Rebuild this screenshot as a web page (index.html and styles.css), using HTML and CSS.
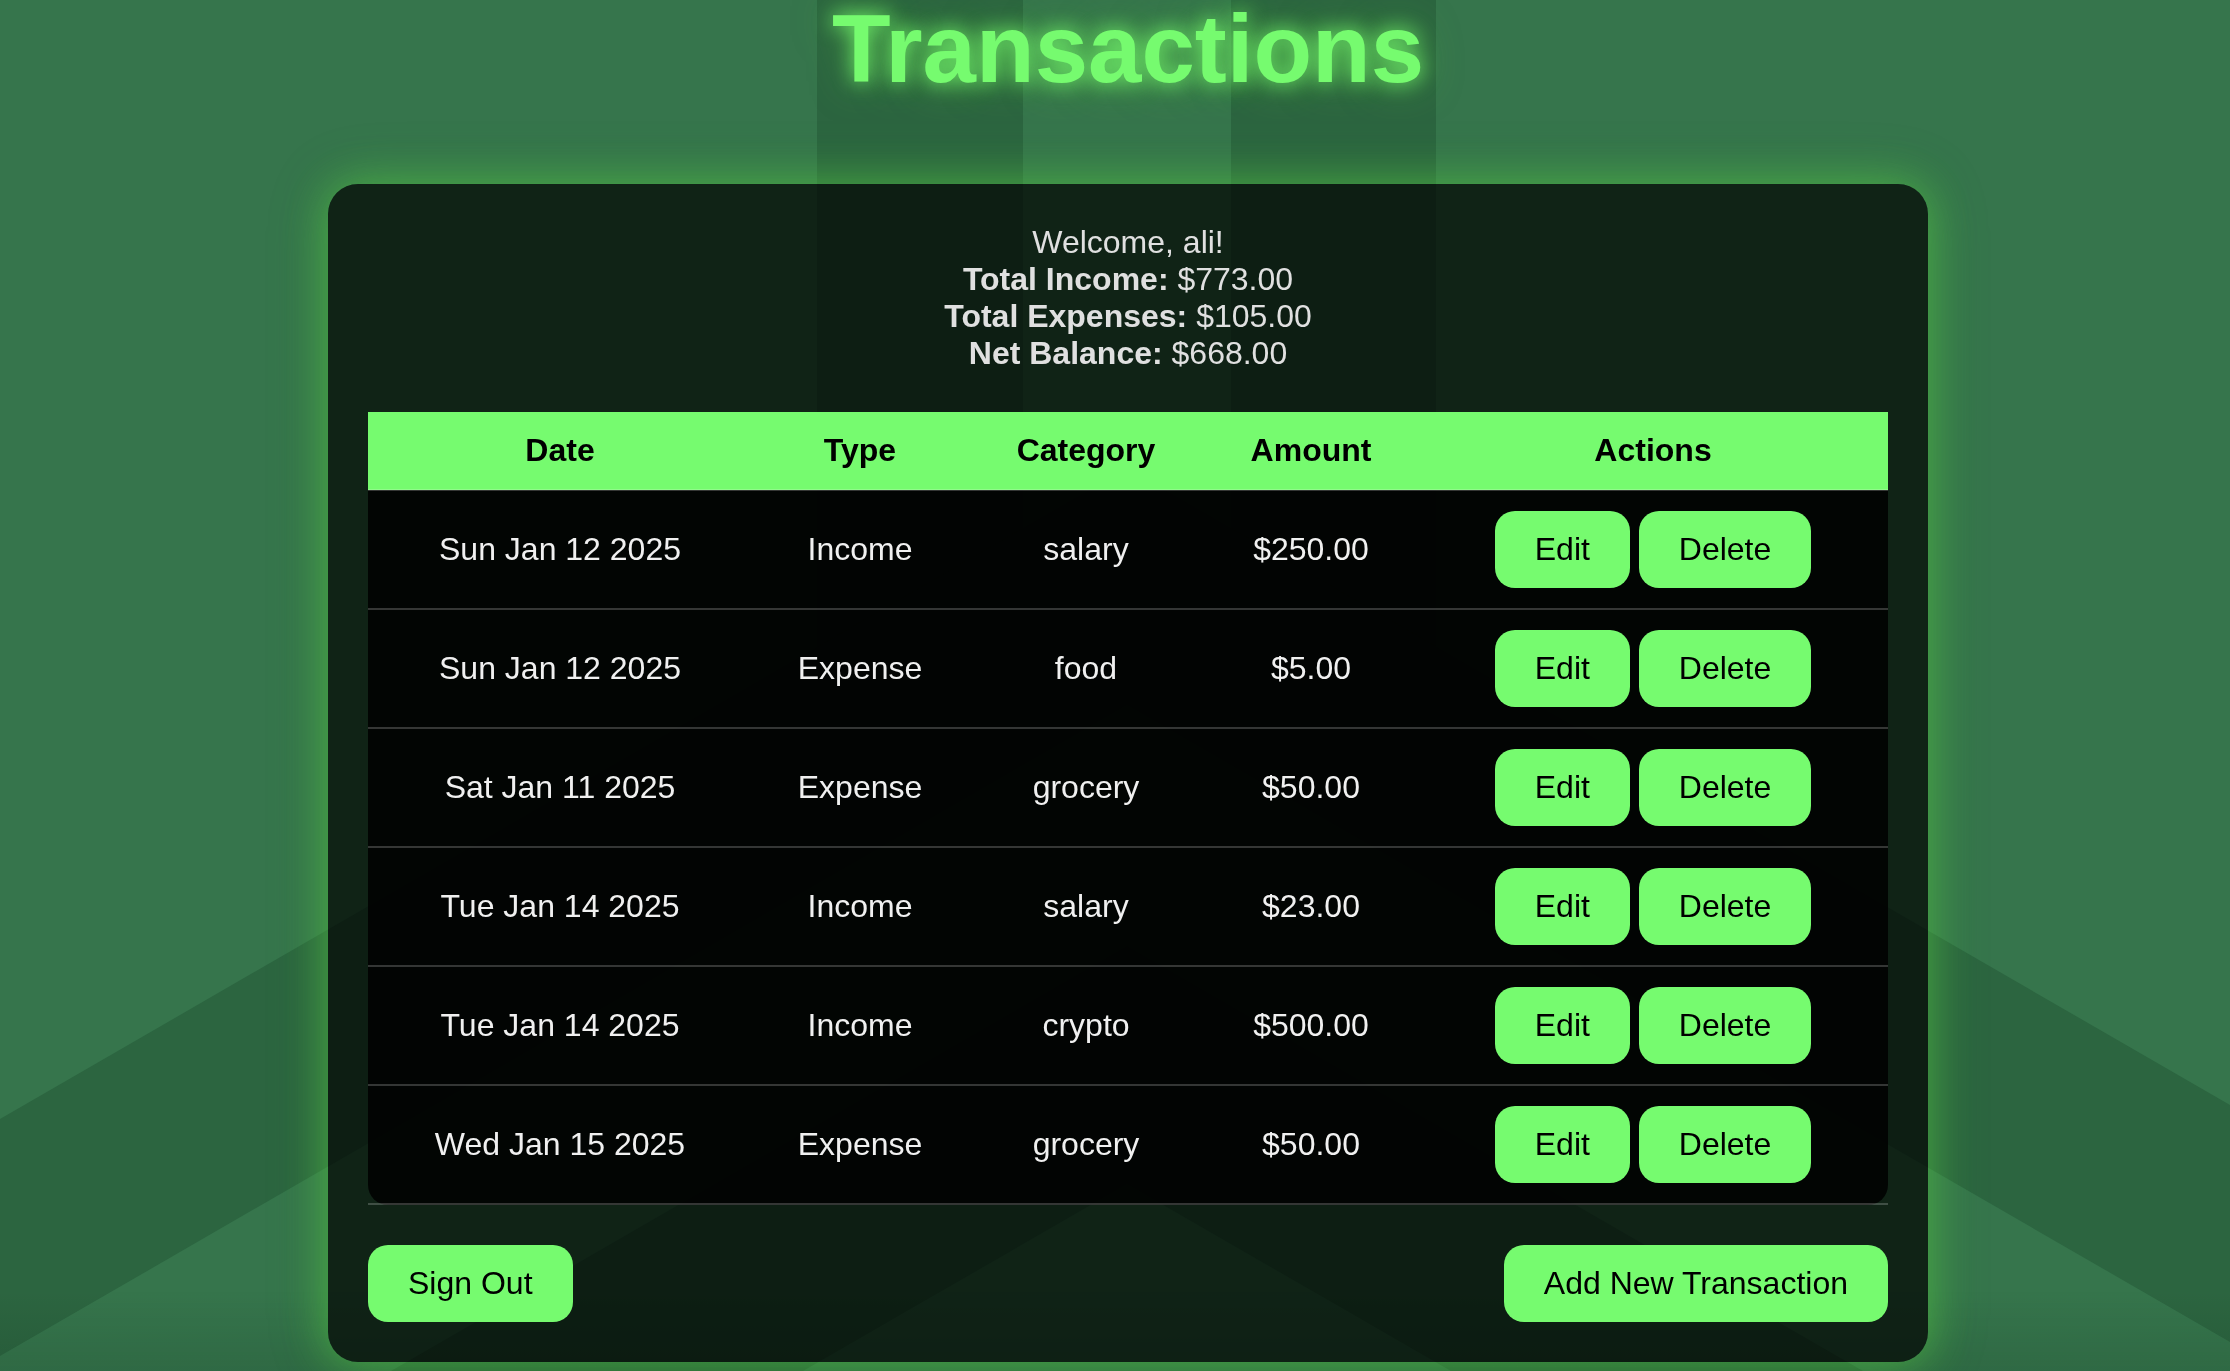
FILE: index.html
```html
<!DOCTYPE html>
<html lang="en">
<head>
<meta charset="utf-8">
<title>Transactions</title>
<link rel="stylesheet" href="styles.css">
</head>
<body>
<svg class="backdrop" viewBox="0 0 2230 1371" preserveAspectRatio="xMidYMin slice" aria-hidden="true">
  <defs>
    <linearGradient id="fade" x1="0" y1="0" x2="0" y2="1">
      <stop offset="0" stop-color="#00160c" stop-opacity="0"/>
      <stop offset="1" stop-color="#00160c" stop-opacity=".12"/>
    </linearGradient>
  </defs>
  <g fill="#2c6540">
    <path d="M817 0H1023V529L817 648Z"/>
    <path d="M1231 0H1436V648L1231 529Z"/>
    <path d="M0 1119L1127 468L2230 1105V1342L1127 705L0 1356Z"/>
    <path d="M391 1371L1127 946L1863 1371H1451L1127 1184L803 1371Z"/>
  </g>
  <rect y="1291" width="2230" height="80" fill="url(#fade)"/>
</svg>
<main class="page">
  <h1 class="title">Transactions</h1>
  <section class="panel">
    <div class="summary">
      <p>Welcome, ali!</p>
      <p><strong>Total Income:</strong> $773.00</p>
      <p><strong>Total Expenses:</strong> $105.00</p>
      <p><strong>Net Balance:</strong> $668.00</p>
    </div>
    <table class="transactions">
      <colgroup><col class="col-date"><col class="col-type"><col class="col-category"><col class="col-amount"><col></colgroup>
      <thead>
        <tr><th scope="col">Date</th><th scope="col">Type</th><th scope="col">Category</th><th scope="col">Amount</th><th scope="col">Actions</th></tr>
      </thead>
      <tbody>
        <tr><td>Sun Jan 12 2025</td><td>Income</td><td>salary</td><td>$250.00</td><td><button class="btn" type="button">Edit</button> <button class="btn" type="button">Delete</button></td></tr>
        <tr><td>Sun Jan 12 2025</td><td>Expense</td><td>food</td><td>$5.00</td><td><button class="btn" type="button">Edit</button> <button class="btn" type="button">Delete</button></td></tr>
        <tr><td>Sat Jan 11 2025</td><td>Expense</td><td>grocery</td><td>$50.00</td><td><button class="btn" type="button">Edit</button> <button class="btn" type="button">Delete</button></td></tr>
        <tr><td>Tue Jan 14 2025</td><td>Income</td><td>salary</td><td>$23.00</td><td><button class="btn" type="button">Edit</button> <button class="btn" type="button">Delete</button></td></tr>
        <tr><td>Tue Jan 14 2025</td><td>Income</td><td>crypto</td><td>$500.00</td><td><button class="btn" type="button">Edit</button> <button class="btn" type="button">Delete</button></td></tr>
        <tr><td>Wed Jan 15 2025</td><td>Expense</td><td>grocery</td><td>$50.00</td><td><button class="btn" type="button">Edit</button> <button class="btn" type="button">Delete</button></td></tr>
      </tbody>
    </table>
    <div class="actions">
      <button class="btn" type="button">Sign Out</button>
      <button class="btn" type="button">Add New Transaction</button>
    </div>
  </section>
</main>
</body>
</html>
```

FILE: styles.css
```css
* {
  box-sizing: border-box;
}

body {
  margin: 0;
  background: #36754c;
  color: #e0e0e0;
  font-family: "Liberation Sans", Helvetica, Arial, sans-serif;
  font-size: 32px;
  line-height: 37px;
}

.backdrop {
  position: fixed;
  inset: 0;
  z-index: -1;
  width: 100%;
  height: 100%;
}

.page {
  display: flex;
  flex-direction: column;
  align-items: center;
  gap: 80px;
  padding: 0 0 9px 26px;
}

.title {
  margin: 0;
  padding-bottom: 6px;
  color: #76fb6f;
  font-size: 96px;
  line-height: 98px;
  text-shadow: 0 0 20px #76fb6f, 0 0 40px rgba(90, 200, 60, .6);
}

.panel {
  width: 100%;
  max-width: 1600px;
  padding: 40px;
  border-radius: 30px;
  background: rgba(0, 0, 0, .7);
  box-shadow: 0 0 40px rgba(83, 200, 65, .55), 0 0 60px rgba(83, 200, 65, .3);
}

.summary {
  margin-bottom: 40px;
  text-align: center;
}

.summary p {
  margin: 0;
}

.transactions {
  width: 100%;
  border-collapse: collapse;
  border-radius: 20px;
  background: rgba(0, 0, 0, .85);
  color: #f0f0f0;
  text-align: center;
}

.col-date {
  width: 384px;
}

.col-type {
  width: 216px;
}

.col-category {
  width: 236px;
}

.col-amount {
  width: 214px;
}

.transactions th,
.transactions td {
  padding: 20px 0;
  border-bottom: 2px solid rgba(255, 255, 255, .2);
}

.transactions th {
  background: #76fb6f;
  color: #000;
}

.btn {
  padding: 20px 40px;
  border: 0;
  border-radius: 20px;
  background: #76fb6f;
  color: #000;
  font: inherit;
  vertical-align: top;
  cursor: pointer;
}

.actions {
  display: flex;
  justify-content: space-between;
  margin-top: 40px;
}
```
